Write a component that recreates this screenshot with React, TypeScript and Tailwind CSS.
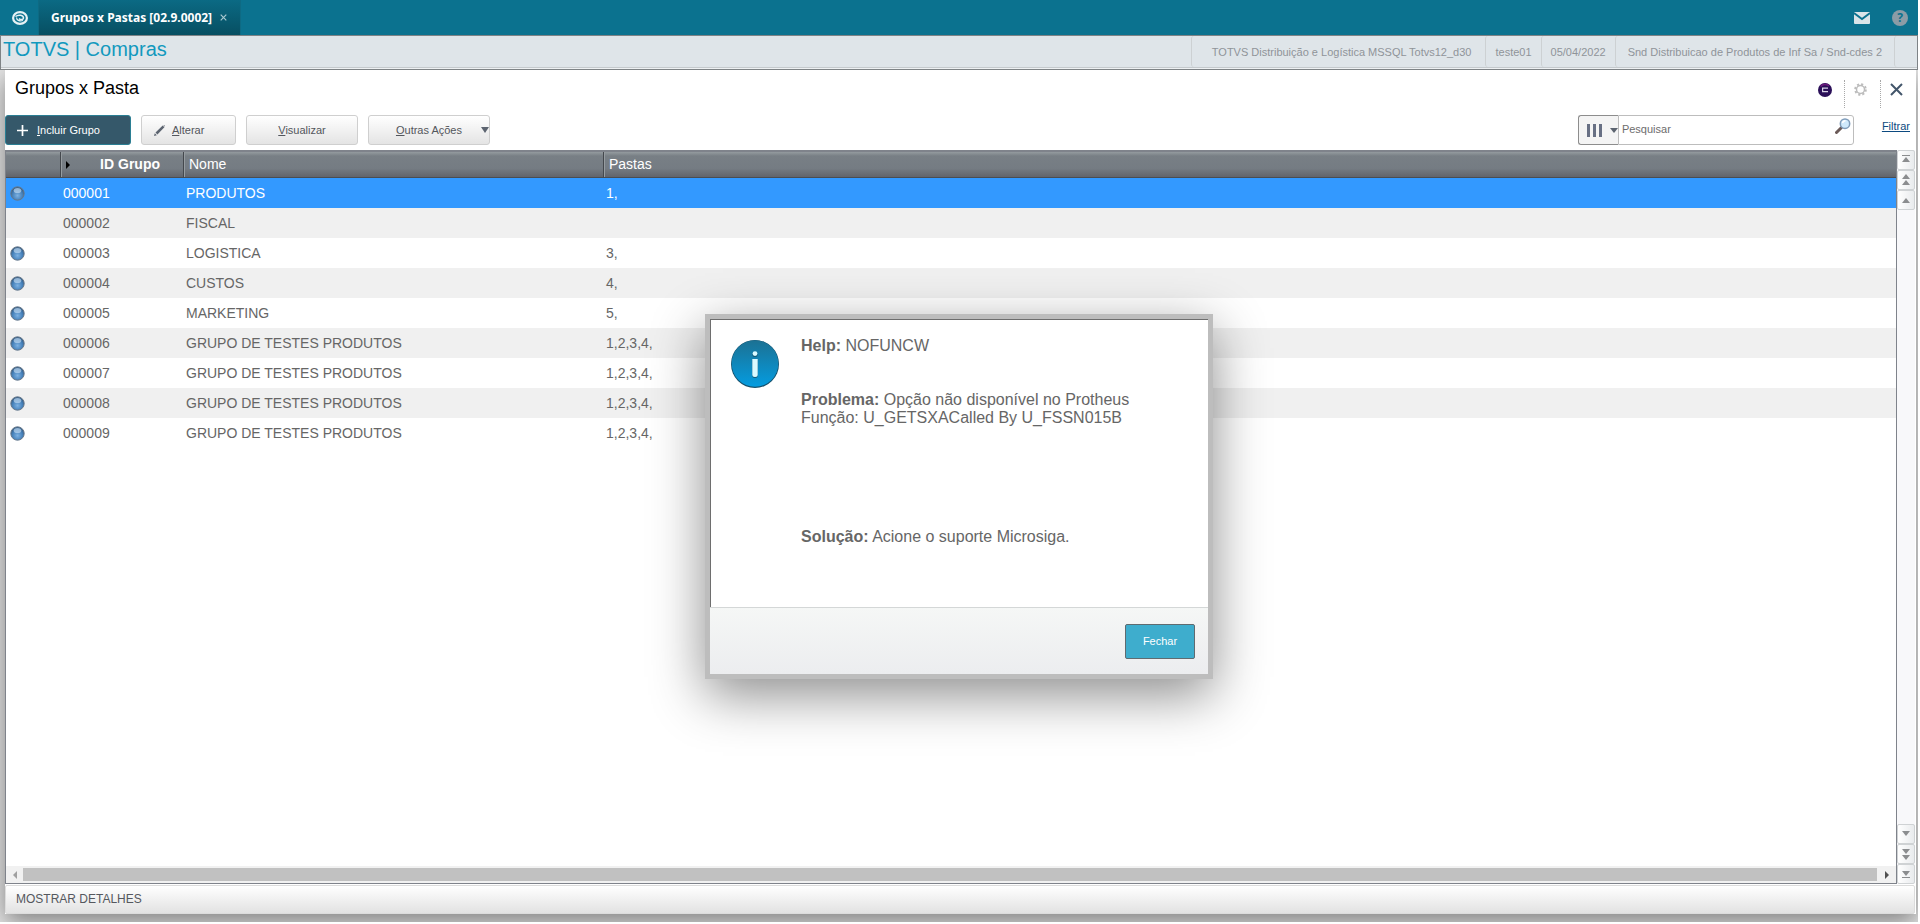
import type { ReactNode } from "react";

type Row = { id: string; nome: string; pastas: string; marked: boolean };

const rows: Row[] = [
  { id: "000001", nome: "PRODUTOS", pastas: "1,", marked: true },
  { id: "000002", nome: "FISCAL", pastas: "", marked: false },
  { id: "000003", nome: "LOGISTICA", pastas: "3,", marked: true },
  { id: "000004", nome: "CUSTOS", pastas: "4,", marked: true },
  { id: "000005", nome: "MARKETING", pastas: "5,", marked: true },
  { id: "000006", nome: "GRUPO DE TESTES PRODUTOS", pastas: "1,2,3,4,", marked: true },
  { id: "000007", nome: "GRUPO DE TESTES PRODUTOS", pastas: "1,2,3,4,", marked: true },
  { id: "000008", nome: "GRUPO DE TESTES PRODUTOS", pastas: "1,2,3,4,", marked: true },
  { id: "000009", nome: "GRUPO DE TESTES PRODUTOS", pastas: "1,2,3,4,", marked: true },
];

function TopBar() {
  return (
    <header className="flex h-[35px] shrink-0 items-stretch bg-[#0b728f]">
      <a href="#inicio" aria-label="Início" className="flex w-[38px] items-center justify-center pl-[2px]">
        <svg width="16" height="14" viewBox="0 0 16 14" fill="none" stroke="#e6f1f4">
          <ellipse cx="8" cy="7" rx="6.900" ry="5.900" strokeWidth="2.200" />
          <path d="M3.500 5.500c3-2.400 8-1.400 8 1.500 0 1.800-2.500 2.200-4.500.6" strokeWidth="1.500" />
          <path d="M4.500 6.500c0 2.600 3 4 6.500 3" strokeWidth="1.200" />
        </svg>
      </a>
      <div className="flex items-center gap-2 border-x border-[#0e6a83] bg-linear-to-b from-[#0b6a84] to-[#074f62] px-[13px] pl-3 font-['Noto_Sans',sans-serif] text-[12px] font-bold text-white">
        <span>Grupos x Pastas [02.9.0002]</span>
        <button type="button" aria-label="Fechar aba" className="flex">
          <svg width="7" height="7" viewBox="0 0 7 7" stroke="#a9c8d0" strokeWidth="1.200">
            <path d="M.7.7l5.600 5.600M6.300.7L.7 6.300" />
          </svg>
        </button>
      </div>
      <div className="ml-auto flex items-center gap-[22px] pr-[10px]">
        <button type="button" aria-label="Mensagens">
          <svg width="16" height="12" viewBox="0 0 16 12">
            <rect width="16" height="12" rx="1" fill="#d9e4e8" />
            <path d="M0 1l8 6 8-6" fill="none" stroke="#0b728f" strokeWidth="1.800" />
          </svg>
        </button>
        <button type="button" aria-label="Ajuda" className="flex size-4 items-center justify-center rounded-full bg-[#8b9ca6] font-['Noto_Sans',sans-serif] text-[12px] font-bold text-[#0b728f]">
          ?
        </button>
      </div>
    </header>
  );
}

function InfoCell({ children, className }: { children?: ReactNode; className: string }) {
  return <div className={`flex items-center rounded-l-[3px] border-l border-[#cdd1d3] pt-[2px] ${className}`}>{children}</div>;
}

function InfoBar() {
  return (
    <div className="flex h-[35px] shrink-0 border border-[#7e8386] bg-[#eef1f3]">
      <div className="mb-px flex flex-1 justify-between border-b border-[#c5cacd] bg-[#dfe5e9]">
        <h1 className="pl-[2px] text-[20px] leading-[26px] text-[#1299be]">TOTVS | Compras</h1>
        <div className="flex text-[11px] whitespace-nowrap text-[#8f9499]">
          <InfoCell className="pr-[14px] pl-5">TOTVS Distribuição e Logística MSSQL Totvs12_d30</InfoCell>
          <InfoCell className="px-[9px]">teste01</InfoCell>
          <InfoCell className="px-[9px]">05/04/2022</InfoCell>
          <InfoCell className="px-3">Snd Distribuicao de Produtos de Inf Sa / Snd-cdes 2</InfoCell>
          <InfoCell className="w-[23px]" />
        </div>
      </div>
    </div>
  );
}

const softButton =
  "flex h-[30px] items-center rounded-[3px] border border-[#cfcfcf] bg-linear-to-b from-white to-[#e4e4e4] text-[11px] text-[#53565c]";

function Toolbar() {
  return (
    <div className="flex h-[30px] items-center gap-[10px] pr-[5px]">
      <button type="button" className="flex h-[30px] w-[126px] items-center gap-[9px] rounded-[3px] border border-[#2b7f94] bg-[#35586a] pl-[11px] text-[11px] text-white">
        <svg width="11" height="11" viewBox="0 0 11 11" stroke="white" strokeWidth="1.700">
          <path d="M5.500 0v11M0 5.500h11" />
        </svg>
        <span><u>I</u>ncluir Grupo</span>
      </button>
      <button type="button" className={`${softButton} w-[95px] gap-[7px] pl-3`}>
        <svg width="11" height="11" viewBox="0 0 11 11" fill="#5c6470">
          <path d="M0 11l.8-2.800 2 2zM1.500 7.500L8.700.6l1.700 1.700L3.400 9.500zM9.300 0h.8L11 .9v.8z" />
        </svg>
        <span><u>A</u>lterar</span>
      </button>
      <button type="button" className={`${softButton} w-[112px] justify-center`}>
        <span><u>V</u>isualizar</span>
      </button>
      <button type="button" className={`${softButton} w-[122px] justify-end gap-[19px]`}>
        <span><u>O</u>utras Ações</span>
        <svg width="8" height="6" viewBox="0 0 8 6" fill="#5c6470"><path d="M0 0h8L4 6z" /></svg>
      </button>
      <div className="ml-auto flex h-[30px]">
        <button type="button" aria-label="Colunas de pesquisa" className="flex w-10 items-center justify-between rounded-l-[3px] border border-r-0 border-[#8d8d8d] bg-[#f4f4f4] pl-2">
          <svg width="15" height="13" viewBox="0 0 15 13" fill="#687084">
            <path d="M0 0h3v13H0zM6 0h3v13H6zM12 0h3v13h-3z" />
          </svg>
          <svg width="8" height="5" viewBox="0 0 8 5" fill="#5c6470"><path d="M0 0h8L4 5z" /></svg>
        </button>
        <label className="flex w-[236px] rounded-r-[3px] border border-[#bdbdbd] bg-white pr-[2px]">
          <input type="text" aria-label="Pesquisar" placeholder="Pesquisar" className="min-w-0 flex-1 pb-[2px] pl-[3px] text-[11px] placeholder:text-[#6d6d6d]" />
          <svg width="16" height="16" viewBox="0 0 16 16" className="mt-[2px]">
            <path d="M1.500 14.500l5-5" stroke="#6b5a58" strokeWidth="3" strokeLinecap="round" />
            <circle cx="10" cy="5.700" r="4.700" fill="#cfe9fb" stroke="#7f9cba" strokeWidth="1.500" />
            <path d="M7.500 5a3 3 0 013-2.200" stroke="white" strokeWidth="1.500" fill="none" />
          </svg>
        </label>
        <a href="#filtrar" className="ml-7 self-start pt-[3px] text-[11px] text-[#0c4a80] underline">Filtrar</a>
      </div>
    </div>
  );
}

function TitleBar() {
  return (
    <div className="flex h-[45px] items-start justify-between pr-3 pl-[10px]">
      <h2 className="pt-[8px] text-[18px] leading-5 text-black">Grupos x Pasta</h2>
      <div className="mt-[10px] flex h-7 items-start">
        <button type="button" aria-label="Assistente" className="mr-3 pt-[3px]">
          <svg width="14" height="14" viewBox="0 0 14 14">
            <circle cx="7" cy="7" r="7" fill="#2a0f58" />
            <path d="M2.500 3.500a5.600 5.600 0 018.500-.5" stroke="#6d1a7c" strokeWidth="1.800" fill="none" />
            <path d="M10 5.200H4.600v3.400H10" stroke="#d9d4e6" strokeWidth="1.200" fill="none" />
          </svg>
        </button>
        <button type="button" aria-label="Configurações" className="flex h-7 w-9 items-start border-l border-dotted border-[#a8a8a8] pt-[3px] pl-[9px]">
          <svg width="13" height="13" viewBox="0 0 13 13" fill="none" stroke="#bcbcbc">
            <circle cx="6.500" cy="6.500" r="4" strokeWidth="1.500" />
            <circle cx="6.500" cy="6.500" r="5.300" strokeWidth="2" strokeDasharray="2.100 2.063" />
          </svg>
        </button>
        <button type="button" aria-label="Fechar janela" className="flex h-7 items-start border-l border-dotted border-[#a8a8a8] pt-[3px] pl-[9px]">
          <svg width="13" height="13" viewBox="0 0 13 13" stroke="#43566b" strokeWidth="2">
            <path d="M1 1l11 11M12 1L1 12" />
          </svg>
        </button>
      </div>
    </div>
  );
}

function Ball() {
  return (
    <svg width="15" height="15" viewBox="0 0 15 15" role="img" aria-label="Ativo">
      <defs>
        <radialGradient id="ball" cx="50%" cy="65%" r="55%">
          <stop offset="0" stopColor="#7db1e2" />
          <stop offset="0.700" stopColor="#4580b9" />
          <stop offset="1" stopColor="#38628c" />
        </radialGradient>
      </defs>
      <circle cx="7.500" cy="7.500" r="6.700" fill="url(#ball)" stroke="#67788a" strokeWidth="1" />
      <ellipse cx="7.500" cy="4.500" rx="3.800" ry="2.600" fill="#c3dcf3" opacity="0.650" />
    </svg>
  );
}

const headCell =
  "h-[26px] border-b border-b-[#4a4d52] bg-[linear-gradient(#949b9f,#787f85_16%,#757c83_65%,#62646b)] p-0 text-left text-[14px] font-normal text-white";
const headDivider = "border-r border-r-[#44484d]";

function GroupTable() {
  return (
    <table className="w-full table-fixed border-separate border-spacing-0 text-[14px]">
      <colgroup>
        <col className="w-[55px]" />
        <col className="w-[123px]" />
        <col className="w-[420px]" />
        <col />
      </colgroup>
      <thead>
        <tr>
          <th className={`${headCell} ${headDivider}`} aria-label="Status" />
          <th className={`${headCell} ${headDivider}`}>
            <span className="flex items-center justify-between border-l border-[#969ca0] pr-[23px] pl-[4px] leading-[25px] font-bold">
              <svg width="4" height="8" viewBox="0 0 4 8"><path d="M0 0l4 4-4 4z" /></svg>
              ID Grupo
            </span>
          </th>
          <th className={`${headCell} ${headDivider}`}><span className="block border-l border-[#969ca0] pl-[4px] leading-[25px]">Nome</span></th>
          <th className={headCell}><span className="block border-l border-[#969ca0] pl-[4px] leading-[25px]">Pastas</span></th>
        </tr>
      </thead>
      <tbody>
        {rows.map((row, i) => (
          <tr
            key={row.id}
            className={i === 0 ? "h-[30px] bg-[#3399ff] text-white" : i % 2 ? "h-[30px] bg-[#f0f0f0] text-[#666]" : "h-[30px] bg-white text-[#666]"}
          >
            <td className="p-0 pl-1">{row.marked && <Ball />}</td>
            <td className="p-0 pl-[2px]">{row.id}</td>
            <td className="p-0 pl-[2px]">{row.nome}</td>
            <td className="p-0 pl-[2px]">{row.pastas}</td>
          </tr>
        ))}
      </tbody>
    </table>
  );
}

function ScrollButton({ label, path }: { label: string; path: string }) {
  return (
    <button type="button" aria-label={label} className="flex h-5 w-[18px] items-center justify-center rounded-[2px] border border-[#cfd2d4] bg-linear-to-r from-white to-[#e9ebed]">
      <svg width="8" height="12" viewBox="0 0 8 12" fill="#8b8d8f"><path d={path} /></svg>
    </button>
  );
}

function VerticalScroll() {
  return (
    <div className="flex w-[18px] shrink-0 flex-col justify-between bg-[#f8f8fa]">
      <div>
        <ScrollButton label="Primeiro" path="M0 1h8v1H0zM4 3l4 5H0z" />
        <ScrollButton label="Página anterior" path="M4 0l4 5H0zM4 6l4 5H0z" />
        <ScrollButton label="Linha anterior" path="M4 4l4 5H0z" />
      </div>
      <div>
        <ScrollButton label="Próxima linha" path="M4 8L0 3h8z" />
        <ScrollButton label="Próxima página" path="M4 6L0 1h8zM4 12L0 7h8z" />
        <ScrollButton label="Último" path="M4 8L0 3h8zM0 9h8v1H0z" />
      </div>
    </div>
  );
}

function HorizontalScroll() {
  return (
    <div className="flex h-[17px] items-center bg-[#f1f1f1]">
      <button type="button" aria-label="Rolar para a esquerda" className="flex w-[17px] justify-center">
        <svg width="4" height="8" viewBox="0 0 4 8" fill="#a0a0a0"><path d="M4 0v8L0 4z" /></svg>
      </button>
      <div className="h-[13px] flex-1 bg-[#c1c1c1]" />
      <button type="button" aria-label="Rolar para a direita" className="flex w-[19px] justify-center">
        <svg width="4" height="8" viewBox="0 0 4 8" fill="#505050"><path d="M0 0v8l4-4z" /></svg>
      </button>
    </div>
  );
}

function HelpDialog() {
  return (
    <div role="dialog" aria-label="Help" className="w-[508px] border-[5px] border-[#bdbdbd] text-[#666] shadow-[0_16px_50px_rgba(0,0,0,0.45)]">
      <div className="flex h-[288px] gap-[22px] border-t border-l border-[#6e6e6e] bg-white pt-[17px] pl-5 text-[16px] leading-[18px]">
        <svg width="48" height="48" viewBox="0 0 48 48" className="mt-[3px] shrink-0">
          <defs>
            <linearGradient id="info" x1="0" y1="0" x2="0" y2="1">
              <stop offset="0" stopColor="#1c7193" />
              <stop offset="1" stopColor="#049ce0" />
            </linearGradient>
          </defs>
          <circle cx="24" cy="24" r="24" fill="#14506c" />
          <circle cx="24" cy="23.500" r="23.300" fill="url(#info)" />
          <circle cx="24" cy="14.500" r="2.600" fill="#155b78" />
          <circle cx="24" cy="13.600" r="2.400" fill="#dcfaff" />
          <path d="M21.300 20h5.400v15.500a2.500 2.500 0 01-2.500 2.500h-.4a2.500 2.500 0 01-2.500-2.500z" fill="#155b78" />
          <path d="M21.300 19h5.400v15.500a2.500 2.500 0 01-2.500 2.500h-.4a2.500 2.500 0 01-2.500-2.500z" fill="#dcfaff" />
        </svg>
        <div>
          <p><b>Help:</b> NOFUNCW</p>
          <p className="mt-9"><b>Problema:</b> Opção não disponível no Protheus<br />Função: U_GETSXACalled By U_FSSN015B</p>
          <p className="mt-[101px]"><b>Solução:</b> Acione o suporte Microsiga.</p>
        </div>
      </div>
      <div className="flex h-[67px] items-start justify-end border-t border-[#d4d7d7] bg-linear-to-b from-[#f5f7f6] to-[#ecedef] pt-4 pr-[13px]">
        <button type="button" className="h-[35px] w-[70px] rounded-[2px] border border-[#5f6b70] bg-[#3eadcd] text-[11px] text-white">Fechar</button>
      </div>
    </div>
  );
}

export default function App() {
  return (
    <div className="flex min-h-screen flex-col bg-white pr-[2px] pb-[2px] font-['Liberation_Sans',Arial,sans-serif]">
      <TopBar />
      <InfoBar />
      <main className="relative flex flex-1 flex-col overflow-hidden bg-[#e6e6e6] pr-[2px] pb-[8px] pl-[5px]">
        <section className="flex flex-1 flex-col bg-white pr-px shadow-[0_8px_24px_rgba(0,0,0,0.45)]">
          <TitleBar />
          <Toolbar />
          <div className="mt-[5px] flex flex-1">
            <div className="flex flex-1 flex-col justify-between border border-t-2 border-[#7f838b] bg-white">
              <GroupTable />
              <HorizontalScroll />
            </div>
            <VerticalScroll />
          </div>
          <button type="button" className="mt-px h-[29px] rounded-[2px] border border-[#dcdcdc] bg-linear-to-b from-white to-[#e2e2e2] pb-[2px] pl-[10px] text-left text-[12px] text-[#55585e]">
            MOSTRAR DETALHES
          </button>
        </section>
        <div className="absolute inset-0 flex items-center justify-center">
          <HelpDialog />
        </div>
      </main>
    </div>
  );
}
